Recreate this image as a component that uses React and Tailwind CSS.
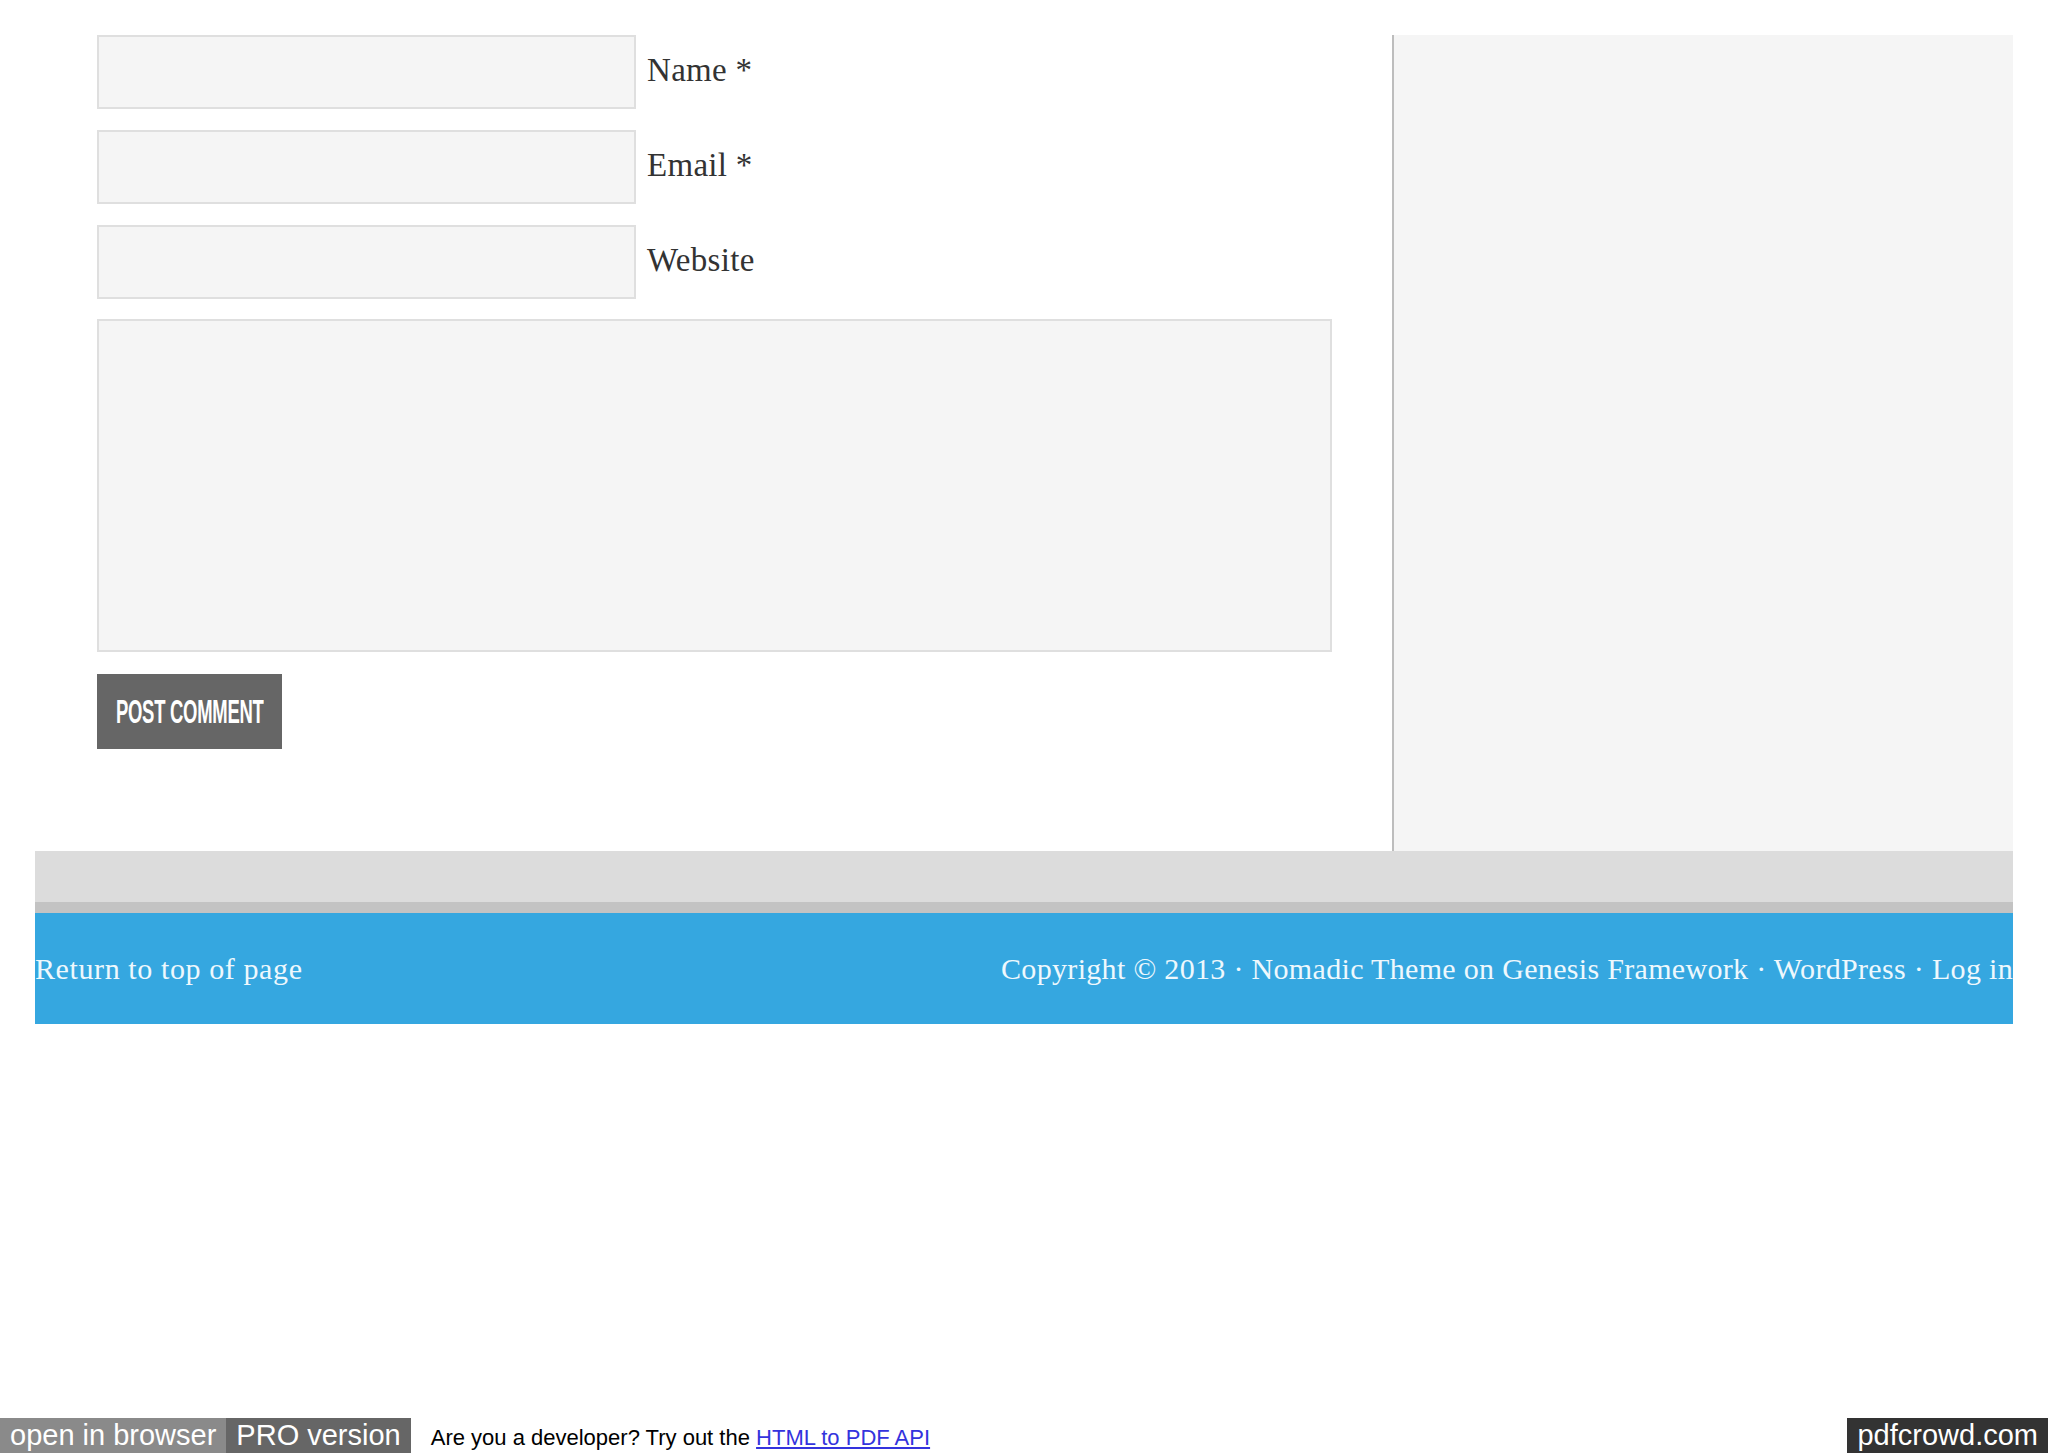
import React from 'react';

const serif = 'font-["Liberation_Serif",Georgia,serif]';

function Field({ label }) {
  return (
    <div className="flex items-center">
      <input
        type="text"
        className="w-[539px] h-[74px] border-2 border-[#dfdfdf] bg-[#f5f5f5] outline-none"
      />
      <label className={`${serif} ml-[11px] text-[33px] leading-none text-[#333] tracking-[0.3px] -mt-[3px]`}>{label}</label>
    </div>
  );
}

export default function App() {
  return (
    <div className="min-h-screen bg-white flex flex-col">
      <div className="mx-[35px] mt-[35px]">
        <div className="flex">
          {/* comment form */}
          <main className="flex-1 pl-[62px] pb-[102px]">
            <div className="flex flex-col gap-[21px]">
              <Field label="Name *" />
              <Field label="Email *" />
              <Field label="Website" />
            </div>
            <textarea className="block mt-[20px] w-[1235px] h-[333px] border-2 border-[#dfdfdf] bg-[#f5f5f5] outline-none resize-none" />
            <button className="mt-[22px] w-[185px] h-[75px] bg-[#666666] text-white flex items-center justify-center overflow-hidden">
              <span className='inline-block font-["Liberation_Sans",Arial,sans-serif] font-semibold text-[33px] leading-none scale-x-[0.56] whitespace-nowrap tracking-[-0.5px]'>
                POST COMMENT
              </span>
            </button>
          </main>

          {/* sidebar */}
          <aside className="w-[621px] shrink-0 bg-[#f5f5f5] border-l-2 border-[#bdbdbd]" />
        </div>

        {/* footer */}
        <div className="h-[51px] bg-[#dcdcdc]" />
        <div className="h-[11px] bg-[#c3c3c3]" />
        <footer className={`${serif} h-[111px] bg-[#35a7e0] text-[#eef8fd] text-[30px] flex items-center justify-between`}>
          <span className="tracking-[0.6px]">Return to top of page</span>
          <span className="tracking-[0.32px]">Copyright © 2013 · Nomadic Theme on Genesis Framework · WordPress · Log in</span>
        </footer>
      </div>

      <div className="flex-1" />

      {/* pdfcrowd bar */}
      <div className='h-[35px] flex items-stretch font-["Liberation_Sans",Arial,sans-serif]'>
        <span className="bg-[#8a8a8a] text-white text-[29px] leading-[35px] px-[10px]">open in browser</span>
        <span className="bg-[#666666] text-white text-[29px] leading-[35px] px-[10px]">PRO version</span>
        <span className="ml-[20px] text-black text-[22px] leading-[35px] pt-[2px]">
          Are you a developer? Try out the{' '}
          <a className="text-[#3333dd] underline">HTML to PDF API</a>
        </span>
        <span className="flex-1" />
        <span className="bg-[#333333] text-white text-[29px] leading-[35px] px-[10px]">pdfcrowd.com</span>
      </div>
    </div>
  );
}
